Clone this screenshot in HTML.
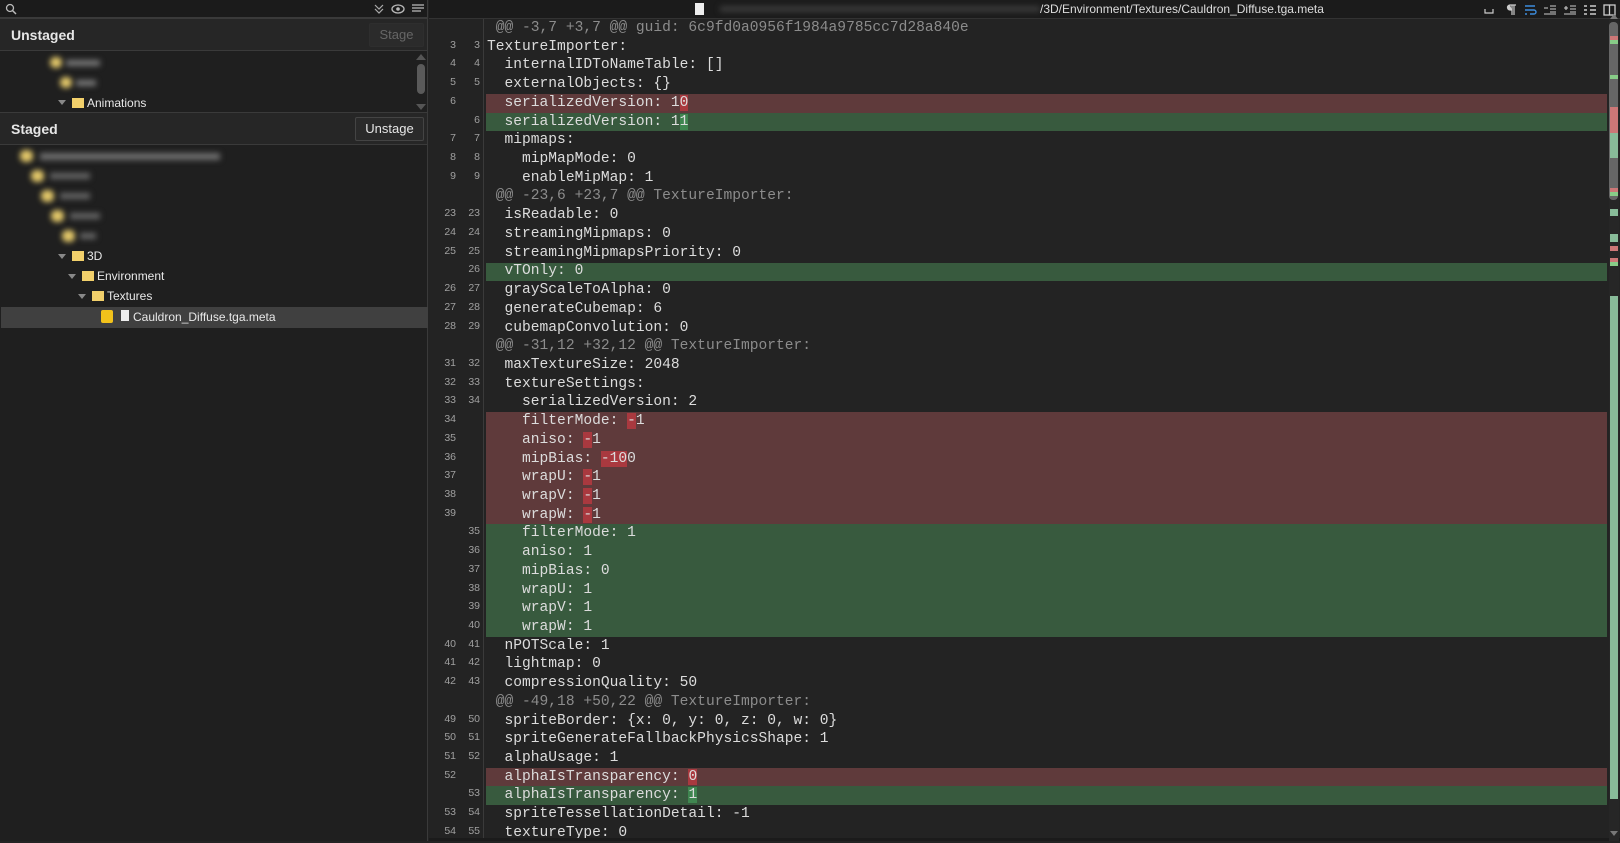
<!DOCTYPE html>
<html><head><meta charset="utf-8"><style>
*{margin:0;padding:0;box-sizing:border-box}
body{width:1620px;height:841px;background:#232323;overflow:hidden;position:relative;font-family:"Liberation Sans",sans-serif;color:#ddd}
.abs{position:absolute}
#left{left:0;top:0;width:428px;height:841px;background:#1f1f1f;border-right:1px solid #3a3a3a}
.topbar{height:18px;background:#1b1b1b;border-bottom:1px solid #3a3a3a}
.hdr{position:absolute;left:0;width:427px;height:33px;background:#262626;border-top:1px solid #3a3a3a;border-bottom:1px solid #3a3a3a}
.hdr b{position:absolute;left:11px;top:8px;font-size:14px;color:#e6e6e6}
.btn{position:absolute;top:4px;height:24px;border:1px solid #3c3c3c;border-radius:2px;background:#2a2a2a;font-size:13px;text-align:center;line-height:22px}
.tr{position:absolute;font-size:12px;color:#e8e8e8;height:20px;line-height:20px;white-space:nowrap}
.arr{position:absolute;width:0;height:0;border-left:4px solid transparent;border-right:4px solid transparent;border-top:5px solid #888}
.fold{position:absolute;width:12px;height:10px;background:#f2d06b}
.blur{position:absolute;filter:blur(3px)}
.code{position:absolute;left:487px;font-family:"Liberation Mono",monospace;font-size:14.6px;color:#dcdcdc;white-space:pre;line-height:18.72px}
.hunk{color:#8c8c8c}
.dh{background:#a9393f}
.ah{background:#3f8650}
.mk{position:absolute;left:1610px;width:8px}
.nums{position:absolute;top:17px;font-family:'Liberation Sans',sans-serif;font-size:10.5px;color:#a0a0a0;line-height:18.72px;text-align:right;width:20px;white-space:pre}
</style></head><body>
<div id="left" class="abs">
 <div class="topbar"></div>
 <svg class="abs" style="left:5px;top:3px" width="12" height="12"><circle cx="5" cy="5" r="3.5" stroke="#bbb" stroke-width="1.3" fill="none"/><line x1="7.5" y1="7.5" x2="11" y2="11" stroke="#bbb" stroke-width="1.5"/></svg>
 <svg class="abs" style="left:373px;top:3px" width="12" height="12"><path d="M2 2l4 4 4-4M2 6l4 4 4-4" stroke="#aaa" stroke-width="1.2" fill="none"/></svg>
 <svg class="abs" style="left:391px;top:3px" width="14" height="12"><ellipse cx="7" cy="6" rx="6" ry="4" stroke="#bbb" stroke-width="1.3" fill="none"/><circle cx="7" cy="6" r="1.8" fill="#bbb"/></svg>
 <svg class="abs" style="left:412px;top:4px" width="12" height="10"><path d="M0 1h12M0 4h12M0 7h9" stroke="#bbb" stroke-width="1.2"/></svg>

 <div class="hdr" style="top:18px"><b>Unstaged</b><div class="btn" style="left:369px;width:55px;color:#666;background:#2b2b2b;border-color:#2e2e2e">Stage</div></div>
 <div class="blur" style="left:50px;top:57px;width:12px;height:11px;background:#e3c86a;border-radius:5px"></div>
 <div class="blur" style="left:66px;top:60px;width:34px;height:6px;background:#777"></div>
 <div class="blur" style="left:60px;top:77px;width:12px;height:11px;background:#e3c86a;border-radius:5px"></div>
 <div class="blur" style="left:76px;top:80px;width:20px;height:6px;background:#777"></div>
 <div class="arr" style="left:58px;top:100px"></div><div class="fold" style="left:72px;top:98px"></div>
 <div class="tr" style="left:87px;top:93px">Animations</div>
 <div class="abs" style="left:416px;top:54px;width:0;height:0;border-left:5px solid transparent;border-right:5px solid transparent;border-bottom:6px solid #555"></div>
 <div class="abs" style="left:417px;top:64px;width:8px;height:30px;background:#5a5a5a;border-radius:4px"></div>
 <div class="abs" style="left:416px;top:104px;width:0;height:0;border-left:5px solid transparent;border-right:5px solid transparent;border-top:6px solid #555"></div>

 <div class="hdr" style="top:112px"><b>Staged</b><div class="btn" style="left:355px;width:69px;color:#e6e6e6;border-color:#444">Unstage</div></div>
 <div class="blur" style="left:20px;top:150px;width:13px;height:12px;background:#e3c86a;border-radius:5px"></div>
 <div class="blur" style="left:40px;top:153px;width:180px;height:7px;background:#6e6e6e"></div>
 <div class="blur" style="left:31px;top:170px;width:13px;height:12px;background:#e3c86a;border-radius:5px"></div>
 <div class="blur" style="left:50px;top:173px;width:40px;height:6px;background:#666"></div>
 <div class="blur" style="left:41px;top:190px;width:13px;height:12px;background:#e3c86a;border-radius:5px"></div>
 <div class="blur" style="left:60px;top:193px;width:30px;height:6px;background:#666"></div>
 <div class="blur" style="left:51px;top:210px;width:13px;height:12px;background:#e3c86a;border-radius:5px"></div>
 <div class="blur" style="left:70px;top:213px;width:30px;height:6px;background:#666"></div>
 <div class="blur" style="left:62px;top:230px;width:13px;height:12px;background:#e3c86a;border-radius:5px"></div>
 <div class="blur" style="left:80px;top:233px;width:16px;height:6px;background:#666"></div>
 <div class="arr" style="left:58px;top:254px"></div><div class="fold" style="left:72px;top:251px"></div><div class="tr" style="left:87px;top:246px">3D</div>
 <div class="arr" style="left:68px;top:274px"></div><div class="fold" style="left:82px;top:271px"></div><div class="tr" style="left:97px;top:266px">Environment</div>
 <div class="arr" style="left:78px;top:294px"></div><div class="fold" style="left:92px;top:291px"></div><div class="tr" style="left:107px;top:286px">Textures</div>
 <div class="abs" style="left:1px;top:307px;width:427px;height:21px;background:#404040"></div>
 <div class="abs" style="left:101px;top:310px;width:12px;height:13px;background:#f2c21b;border-radius:2px"></div>
 <div class="abs" style="left:121px;top:310px;width:8px;height:11px;background:#eee"></div>
 <div class="tr" style="left:133px;top:307px">Cauldron_Diffuse.tga.meta</div>
</div>

<div class="abs" style="left:429px;top:0;width:1191px;height:19px;background:#1b1b1b;border-bottom:1px solid #333"></div>
<div class="abs" style="left:695px;top:3px;width:9px;height:12px;background:#eee"></div>
<div class="blur" style="left:720px;top:6px;width:320px;height:6px;background:#3a3a3a"></div>
<div class="abs" style="left:1040px;top:2px;font-size:12px;color:#ddd;white-space:nowrap">/3D/Environment/Textures/Cauldron_Diffuse.tga.meta</div>
<svg class="abs" style="left:1482px;top:4px" width="138" height="12">
 <path d="M3 5v4h8V5" stroke="#ccc" stroke-width="1.2" fill="none"/>
 <path d="M28 1h6M30 1v10M32 1v10M28 1a2.5 2.5 0 0 0 0 5h2" stroke="#ccc" stroke-width="1.2" fill="#ccc"/>
 <path d="M43 2h10M43 6h9a2 2 0 0 1 0 4h-4M43 10h2" stroke="#3c8cdc" stroke-width="1.4" fill="none"/>
 <path d="M62 4h4M68 2h6M68 5h6M68 8h6M62 10h12" stroke="#ccc" stroke-width="1.1"/>
 <path d="M82 4h4M84 2v4M88 2h6M88 5h6M88 8h6M82 10h12" stroke="#ccc" stroke-width="1.1"/>
 <path d="M102 2h3M102 6h3M102 10h3M108 2h6M108 6h6M108 10h6" stroke="#ccc" stroke-width="1.5"/>
 <rect x="122" y="1" width="11" height="10" stroke="#ccc" stroke-width="1.3" fill="none"/><path d="M127.5 1v10" stroke="#ccc" stroke-width="1.3"/>
</svg>

<div class="abs" style="left:483px;top:19px;width:1px;height:822px;background:#3a3a3a"></div>

<div class="abs" style="left:486px;top:94px;width:1121px;height:18.7px;background:#5f3a3b"></div>
<div class="abs" style="left:486px;top:112.7px;width:1121px;height:18.7px;background:#385a3e"></div>
<div class="abs" style="left:486px;top:262.5px;width:1121px;height:18.7px;background:#385a3e"></div>
<div class="abs" style="left:486px;top:412px;width:1121px;height:112.3px;background:#5f3a3b"></div>
<div class="abs" style="left:486px;top:524.3px;width:1121px;height:112.3px;background:#385a3e"></div>
<div class="abs" style="left:486px;top:767.5px;width:1121px;height:18.7px;background:#5f3a3b"></div>
<div class="abs" style="left:486px;top:786.2px;width:1121px;height:18.7px;background:#385a3e"></div>

<div class="code" style="top:19px"><span class="hunk"> @@ -3,7 +3,7 @@ guid: 6c9fd0a0956f1984a9785cc7d28a840e</span>
TextureImporter:
  internalIDToNameTable: []
  externalObjects: {}
  serializedVersion: 1<span class="dh">0</span>
  serializedVersion: 1<span class="ah">1</span>
  mipmaps:
    mipMapMode: 0
    enableMipMap: 1
<span class="hunk"> @@ -23,6 +23,7 @@ TextureImporter:</span>
  isReadable: 0
  streamingMipmaps: 0
  streamingMipmapsPriority: 0
  vTOnly: 0
  grayScaleToAlpha: 0
  generateCubemap: 6
  cubemapConvolution: 0
<span class="hunk"> @@ -31,12 +32,12 @@ TextureImporter:</span>
  maxTextureSize: 2048
  textureSettings:
    serializedVersion: 2
    filterMode: <span class="dh">-</span>1
    aniso: <span class="dh">-</span>1
    mipBias: <span class="dh">-10</span>0
    wrapU: <span class="dh">-</span>1
    wrapV: <span class="dh">-</span>1
    wrapW: <span class="dh">-</span>1
    filterMode: 1
    aniso: 1
    mipBias: 0
    wrapU: 1
    wrapV: 1
    wrapW: 1
  nPOTScale: 1
  lightmap: 0
  compressionQuality: 50
<span class="hunk"> @@ -49,18 +50,22 @@ TextureImporter:</span>
  spriteBorder: {x: 0, y: 0, z: 0, w: 0}
  spriteGenerateFallbackPhysicsShape: 1
  alphaUsage: 1
  alphaIsTransparency: <span class="dh">0</span>
  alphaIsTransparency: <span class="ah">1</span>
  spriteTessellationDetail: -1
  textureType: 0</div>

<div class="nums" style="left:436px"> 
3
4
5
6
 
7
8
9
 
23
24
25
 
26
27
28
 
31
32
33
34
35
36
37
38
39
 
 
 
 
 
 
40
41
42
 
49
50
51
52
 
53
54</div>
<div class="nums" style="left:460px"> 
3
4
5
 
6
7
8
9
 
23
24
25
26
27
28
29
 
32
33
34
 
 
 
 
 
 
35
36
37
38
39
40
41
42
43
 
50
51
52
 
53
54
55</div>

<div class="abs" style="left:429px;top:838px;width:1191px;height:3px;background:#1b1b1b"></div>

<div class="abs" style="left:1609px;top:20px;width:10px;height:821px;background:#262626"></div>
<div class="abs" style="left:1610px;top:14px;width:0;height:0;border-left:4px solid transparent;border-right:4px solid transparent;border-bottom:5px solid #777"></div>
<div class="abs" style="left:1609px;top:22px;width:9px;height:178px;background:#666;border-radius:4px"></div>
<div class="mk" style="top:36px;height:4px;background:#c77"></div>
<div class="mk" style="top:40px;height:4px;background:#8c8"></div>
<div class="mk" style="top:75px;height:4px;background:#8c8"></div>
<div class="mk" style="top:107px;height:26px;background:#c77"></div>
<div class="mk" style="top:133px;height:25px;background:#8b9"></div>
<div class="mk" style="top:188px;height:4px;background:#c77"></div>
<div class="mk" style="top:192px;height:4px;background:#8c8"></div>
<div class="mk" style="top:209px;height:7px;background:#8b9"></div>
<div class="mk" style="top:234px;height:8px;background:#8b9"></div>
<div class="mk" style="top:246px;height:5px;background:#c77"></div>
<div class="mk" style="top:258px;height:4px;background:#c77"></div>
<div class="mk" style="top:262px;height:4px;background:#8c8"></div>
<div class="mk" style="top:296px;height:503px;background:#8b9"></div>
<div class="abs" style="left:1610px;top:831px;width:0;height:0;border-left:4px solid transparent;border-right:4px solid transparent;border-top:5px solid #777"></div>
</body></html>
